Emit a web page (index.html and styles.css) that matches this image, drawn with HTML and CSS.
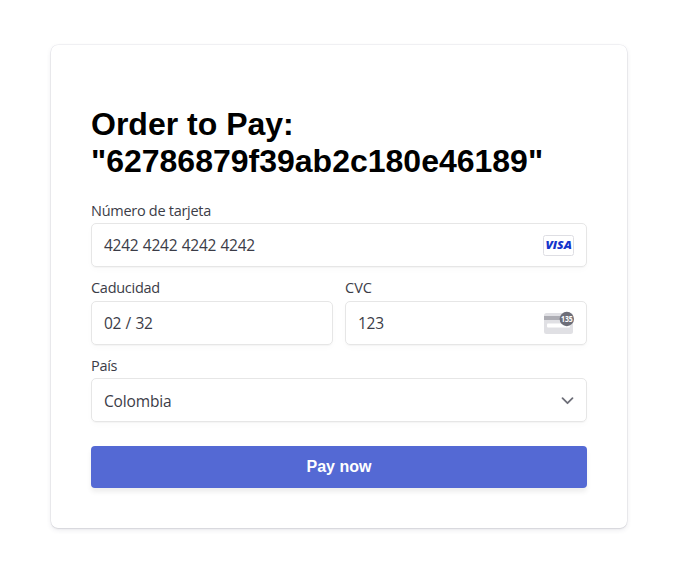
FILE: index.html
```html
<!DOCTYPE html>
<html lang="es">
<head>
<meta charset="utf-8">
<title>Payment</title>
<link rel="stylesheet" href="styles.css">
</head>
<body>
<form class="card">
  <h1>Order to Pay: "62786879f39ab2c180e46189"</h1>
  <div class="fields">
    <div class="field wide">
      <div class="label">Número de tarjeta</div>
      <div class="input"><span class="digits">4242 4242 4242 4242</span>
        <svg class="brand" width="31" height="21" viewBox="0 0 31 21"><rect x=".5" y=".5" width="30" height="20" rx="2" fill="#fff" stroke="#dedee3"/><text x="2.4" y="14.4" textLength="26.5" lengthAdjust="spacingAndGlyphs" class="visa">VISA</text></svg>
      </div>
    </div>
    <div class="field">
      <div class="label middle">Caducidad</div>
      <div class="input"><span class="digits">02 / 32</span></div>
    </div>
    <div class="field">
      <div class="label middle cvc">CVC</div>
      <div class="input"><span class="digits">123</span>
        <svg class="brand" width="31" height="24" viewBox="0 0 31 24"><rect x="1" y="2" width="29" height="21" rx="2.5" fill="#e0e0e4"/><path d="M1 5h29v4H1z" fill="#adadb4"/><rect x="4" y="12.5" width="23" height="4" rx="1" fill="#fff"/><circle cx="23.8" cy="8" r="7.2" fill="#6d6e78"/><text x="18" y="11.1" textLength="11.8" lengthAdjust="spacingAndGlyphs" class="code">135</text></svg>
      </div>
    </div>
    <div class="field wide">
      <div class="label">País</div>
      <div class="input country">Colombia
        <svg class="chevron" width="13" height="10" viewBox="0 0 13 10"><path d="M1.5 2.2l5 5 5-5" fill="none" stroke="#6d6e78" stroke-width="1.8" stroke-linecap="round" stroke-linejoin="round"/></svg>
      </div>
    </div>
  </div>
  <button type="button">Pay now</button>
</form>
</body>
</html>
```
FILE: styles.css
```css
* { box-sizing: border-box; }
body { margin: 0; padding: 44.5px 0 50px 51px; background: #fff; font-family: "Open Sans", "Noto Sans", sans-serif; }
.card { width: 576px; height: 483.5px; padding: 61px 40px 40px; border-radius: 7px;
  box-shadow: 0 0 0 .5px rgba(50,50,93,.1), 0 2px 5px rgba(50,50,93,.1), 0 1px 1.5px rgba(0,0,0,.07); }
h1 { margin: 0 0 21.5px; font: bold 32px/37px "Liberation Sans", sans-serif; color: #000; }
.fields { display: grid; grid-template-columns: 1fr 1fr; gap: 11.5px 12px; }
.label { height: 18px; margin-bottom: 4px; font-size: 14.5px; line-height: 19px; letter-spacing: -.28px; color: #3b3c47; }
.middle { line-height: 18px; }
.cvc { letter-spacing: 0; }
.input { display: flex; align-items: center; justify-content: space-between; height: 44px; padding: 0 12px;
  border: 1px solid #e6e6e6; border-radius: 5px; font-size: 15.5px; letter-spacing: -.25px; color: #3b3c47;
  box-shadow: 0 1px 1px rgba(0,0,0,.03), 0 3px 6px rgba(0,0,0,.02); }
.country { padding-top: 1px; letter-spacing: -.15px; }
.digits { word-spacing: .6px; }
.brand { overflow: visible; }
.wide { grid-column: 1 / -1; }
.visa { font: italic 800 11px "Open Sans", sans-serif; letter-spacing: 0; fill: #1434cb; }
.code { font: bold 8px "Open Sans", sans-serif; letter-spacing: 0; fill: #fff; }
button { display: block; width: 100%; height: 42px; margin-top: 24px; border: 0; border-radius: 4px;
  background: #5469d4; color: #fff; font: bold 16px "Liberation Sans", sans-serif; box-shadow: 0 4px 5.5px rgba(0,0,0,.07); }
```
